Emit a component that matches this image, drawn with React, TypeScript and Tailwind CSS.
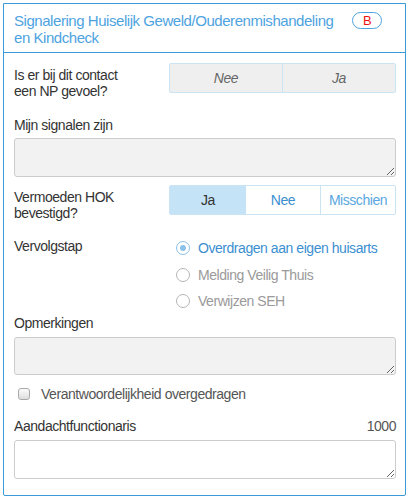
import React from "react";

const font = "font-['Liberation_Sans',Arial,sans-serif]";

function Radio({ label, checked }: { label: string; checked?: boolean }) {
  return (
    <div className="flex items-center gap-[8px] h-[16px]">
      <span
        className={
          "flex h-[14px] w-[14px] items-center justify-center rounded-full border bg-white " +
          (checked ? "border-[#8cc2ea]" : "border-[#b5b5b5]")
        }
      >
        {checked && <span className="h-[6px] w-[6px] rounded-full bg-[#8cc2ea]" />}
      </span>
      <span className={checked ? "text-[#3b8fd1]" : "text-[#9a9a9a]"}>{label}</span>
    </div>
  );
}

export default function App() {
  return (
    <div className={`${font} bg-white text-[14px] leading-[16px] tracking-[-0.45px] text-[#333] w-[409px] h-[501px] pt-[3px] pl-[3px]`}>
      <div className="w-[403px] h-[493px] border border-[#3c9ad7] rounded-b-[2px] flex flex-col">
        {/* header */}
        <div className="flex items-start justify-between border-b border-[#3c9ad7] pl-[10px] pr-[23px] pt-[8px] h-[49px]">
          <h2 className="text-[#4ea3df] text-[15px] leading-[17px] w-[326px]">
            Signalering Huiselijk Geweld/Ouderenmishandeling
            <br />
            en Kindcheck
          </h2>
          <span className="flex h-[17px] w-[30px] items-center justify-center rounded-full border border-[#4ea3df] text-[13px] text-[#ee1111]">
            B
          </span>
        </div>

        <div className="pl-[10px] pr-[9px] flex flex-col">
          {/* NP gevoel */}
          <div className="mt-[10px] flex items-start">
            <div className="w-[155px] pt-[4px]">
              Is er bij dit contact
              <br />
              een NP gevoel?
            </div>
            <div className="flex flex-1 h-[30px] border border-[#cbe4f4] bg-[#efefef] rounded-[2px] italic text-[#666]">
              <div className="flex-1 flex items-center justify-center border-r border-[#cbe4f4]">Nee</div>
              <div className="flex-1 flex items-center justify-center">Ja</div>
            </div>
          </div>

          {/* signalen */}
          <div className="mt-[18px]">Mijn signalen zijn</div>
          <textarea
            readOnly
            className="mt-[5px] h-[39px] w-full rounded-[3px] border border-[#cccccc] bg-[#f2f2f2] outline-none"
          />

          {/* HOK */}
          <div className="mt-[8px] flex items-start">
            <div className="w-[155px] pt-[4px]">
              Vermoeden HOK
              <br />
              bevestigd?
            </div>
            <div className="flex flex-1 h-[30px] border border-[#cbe4f4] rounded-[2px]">
              <div className="w-[76px] flex items-center justify-center bg-[#c5e3f6] text-[#333]">Ja</div>
              <div className="w-[75px] flex items-center justify-center border-r border-[#cbe4f4] text-[#3b8fd1]">
                Nee
              </div>
              <div className="flex-1 flex items-center justify-center text-[#5aa7e0]">Misschien</div>
            </div>
          </div>

          {/* vervolgstap */}
          <div className="mt-[17px] flex items-start">
            <div className="w-[162px]">Vervolgstap</div>
            <div className="flex flex-col gap-[10.5px] pt-[2px]">
              <Radio label="Overdragen aan eigen huisarts" checked />
              <Radio label="Melding Veilig Thuis" />
              <Radio label="Verwijzen SEH" />
            </div>
          </div>

          {/* opmerkingen */}
          <div className="mt-[6px]">Opmerkingen</div>
          <textarea
            readOnly
            className="mt-[6px] h-[38px] w-full rounded-[3px] border border-[#cccccc] bg-[#f2f2f2] outline-none"
          />

          <div className="mt-[11px] flex items-center gap-[11px] pl-[4px] text-[#555]">
            <span className="h-[12px] w-[12px] rounded-[3px] border border-[#a9a9a9] bg-gradient-to-b from-[#fbfbfb] to-[#dedede]" />
            <span>Verantwoordelijkheid overgedragen</span>
          </div>

          {/* aandachtfunctionaris */}
          <div className="mt-[16px] flex justify-between">
            <span>Aandachtfunctionaris</span>
            <span className="text-[#555]">1000</span>
          </div>
          <textarea
            readOnly
            className="mt-[6px] h-[39px] w-full rounded-[3px] border border-[#cccccc] bg-white outline-none"
          />
        </div>
      </div>
    </div>
  );
}
